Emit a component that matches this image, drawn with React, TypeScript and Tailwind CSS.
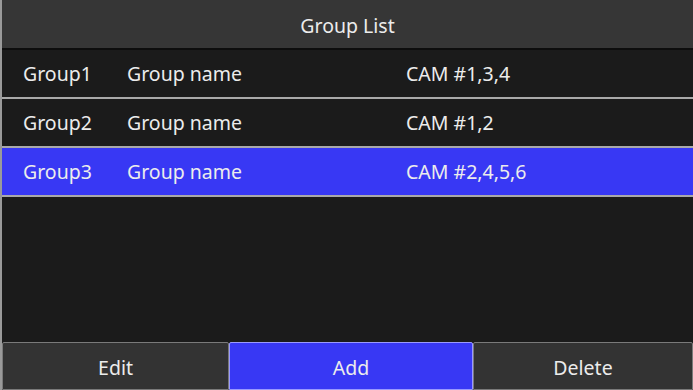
const groups = [
  { id: 'Group1', name: 'Group name', cams: 'CAM #1,3,4', selected: false },
  { id: 'Group2', name: 'Group name', cams: 'CAM #1,2', selected: false },
  { id: 'Group3', name: 'Group name', cams: 'CAM #2,4,5,6', selected: true },
]

export default function App() {
  return (
    <div className="w-[693px] h-[390px] flex flex-col bg-[#1b1b1b] border-l-2 border-[#9a9a9a] text-[#ececec] text-[19.5px] overflow-hidden" style={{ fontFamily: '"Noto Sans", sans-serif' }}>
      <div className="h-[50px] shrink-0 flex items-center justify-center pt-[3px] bg-[#363636] border-b-2 border-[#0d0d0d]">
        Group List
      </div>
      <div className="flex-1 flex flex-col">
        {groups.map((g) => (
          <div
            key={g.id}
            className={`h-[49px] shrink-0 flex items-center border-b-2 border-[#a9a9a9] ${g.selected ? 'bg-[#3838f4]' : 'bg-[#1b1b1b]'}`}
          >
            <span className="w-[125px] pl-[21px]">{g.id}</span>
            <span className="w-[279px]">{g.name}</span>
            <span>{g.cams}</span>
          </div>
        ))}
      </div>
      <div className="h-[48px] shrink-0 flex">
        <button className="w-[227px] pt-[4px] bg-[#333333] border border-[#7a7a7a] rounded-t-[2px]">Edit</button>
        <button className="w-[244px] pt-[4px] bg-[#3838f4] border border-[#9a9aff] rounded-t-[2px]">Add</button>
        <button className="flex-1 pt-[4px] bg-[#333333] border border-[#7a7a7a] rounded-t-[2px]">Delete</button>
      </div>
    </div>
  )
}
